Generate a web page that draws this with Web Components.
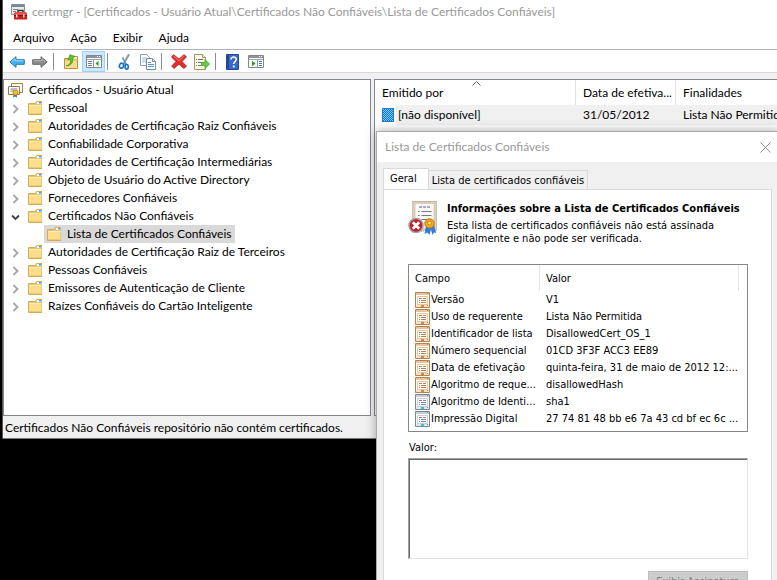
<!DOCTYPE html>
<html lang="pt-BR">
<head>
<meta charset="utf-8">
<title>certmgr</title>
<style>
  html, body { height: 100%; }
  body {
    margin: 0;
    background: #000;
    color: #000;
    overflow: hidden;
    --ui: 12px/18px Lato, "Open Sans", sans-serif;
    --dlg: 11px/13px "DejaVu Sans Condensed", "DejaVu Sans", sans-serif;
    --edge: #828790;
    --face: #f0f0f0;
    font: var(--ui);
  }
</style>
</head>
<body>
<cert-desktop></cert-desktop>

<script>
const folder = `<path d="M.5 2.500h7l1-2h5.500v13H.5z" fill="#e9c66d" stroke="#d3ae58"/><path d="M9 1h4.500v2H9z" fill="#fff"/><path d="M11 1h2.500v1.500H11z" fill="#3c9df0"/><path d="M1 4h12.500v9H1z" fill="#fbdd8b"/><path d="M1 4h12.500v1H1z" fill="#ffedb5"/><path d="M1 12h12.500v1H1z" fill="#efc96f"/>`;
const field = (a, b, c) => `<path d="M.5.5h14v15H.5z" fill="#fff" stroke="${a}"/><path d="M1 1h13v2H1z" fill="${b}"/><path d="M12 1h1v1h-1z" fill="${a}"/><path d="M2.500 4.500h10v8h-10z" fill="#fff" stroke="${b}"/><path d="M4 6h3v1H4zM8 6h3v1H8zM4 8h1v1H4zM6 8h5v1H6zM4 10h1v1H4zM6 10h5v1H6z" fill="${a}"/><path d="M1 13h13v2H1z" fill="${b}" opacity=".5"/><path d="M6 13h3v2H6z" fill="${c}"/><path d="M12 13h1v1h-1z" fill="${a}"/>`;
const paneWindow = `<path d="M.5.5h15v12H.5z" fill="#fff" stroke="#7f8790"/><path d="M1 1h14v2H1z" fill="#8b949d"/><path d="M11 1h1v1h-1zM13 1h1v1h-1z" fill="#fff"/><path d="M1 4.500h14" stroke="#a0a6ad"/>`;

const ICONS = {
  app: [16, 16, `<path d="M.5.5h13v10H.5z" fill="#e9ecef" stroke="#8a8f94"/><path d="M1 1h12v2H1z" fill="#7d858d"/><path d="M2 5h5v1H2zM2 7h3v1H2z" fill="#7b8894"/><path d="M7 8.500V6.500h5v2" fill="none" stroke="#333" stroke-width="1.500"/><path d="M3 9h13v6.500H3z" fill="#c2211d"/><path d="M4 8h11l1 3H3z" fill="#e55348"/><path d="M3 11.500h13" stroke="#7d0f0e"/><path d="M5 10.500h1.500v3H5zM12 10.500h1.500v3H12z" fill="#e7e1dc"/>`],
  back: [16, 12, `<path d="M.8 6 7 .7v3h8.300v4.600H7v3z" fill="#45b1ee" stroke="#2377b7"/><path d="M2.500 5.700 6 2.700v2h8.300" fill="none" stroke="#a2ddfa"/>`],
  forward: [16, 12, `<path d="M15.200 6 9 .7v3H.7v4.600H9v3z" fill="#8c8c8c" stroke="#666"/><path d="M1.700 4.700H10v-2l3.500 3" fill="none" stroke="#b7b7b7"/>`],
  up: [14, 15, `<path d="M.5 4.500h6l1-2h6v12H.5z" fill="#edc96f" stroke="#b8923d"/><path d="M9 3h4v1.500H9z" fill="#fff"/><path d="M1 7h12v7H1z" fill="#f8dc91"/><path d="M2 11.500c3 .3 5-2.500 4.500-6.500L4 6 6 .7l5 1.800L8.800 4C9.500 8.500 6.500 12.500 2 11.500z" fill="#5cc52d" stroke="#36921c" stroke-width=".7"/>`],
  paneLeft: [16, 13, paneWindow + `<path d="M2 6h4v1H2zM2 8h4v1H2zM2 10h4v1H2z" fill="#6e7e8d"/><path d="M7.500 5v7.500" stroke="#8b949d"/><path d="M12.500 5.700v5.600L9.500 8.500z" fill="#1fa31b"/>`],
  paneRight: [16, 13, paneWindow + `<path d="M9.500 5v7.500" stroke="#8b949d"/><path d="M11 6h3v1h-3zM11 8h3v1h-3zM11 10h3v1h-3z" fill="#4879b5"/><path d="M4 5.700v5.600l3.500-2.800z" fill="#1fa31b"/>`],
  cut: [14, 16, `<path d="M11 0 5.500 10M4.500 3.500 8.500 11" stroke="#9eb4c6" stroke-width="2.200"/><path d="M11.300.5 6 10M5 4l3 6.500" stroke="#5f7d95" stroke-width=".7"/><ellipse cx="3.500" cy="11.700" rx="2" ry="2.500" fill="none" stroke="#1673c8" stroke-width="1.700" transform="rotate(25 3.500 11.700)"/><ellipse cx="8.700" cy="12.800" rx="1.600" ry="2.300" fill="none" stroke="#1673c8" stroke-width="1.700"/>`],
  copy: [16, 16, `<path d="M.5.5h6l3 3v8h-9z" fill="#fff" stroke="#8b9cad"/><path d="M2 4h5M2 6h5M2 8h5" stroke="#9fb9d3"/><path d="M6.500 4.500h6l3 3v8h-9z" fill="#fff" stroke="#768ba0"/><path d="M12.500 4.500v3h3" fill="#dbe5ee" stroke="#768ba0"/><path d="M8 8.500h3M8 10.500h6M8 12.500h6" stroke="#5d92c4"/>`],
  del: [16, 15, `<path d="M2.500.7 8 5l5-4.300 2.500 2L11 7.500l4.500 4.700-2.700 2.300L8 10l-5 4.500L.7 12 5 7.500.5 3z" fill="#e3302b" stroke="#b31713" stroke-width=".8"/><path d="m2.500 2 5.500 4.500L13 2" fill="none" stroke="#f58578"/>`],
  exportList: [16, 16, `<path d="M.5.5h8l3 3v12H.5z" fill="#fffbe2" stroke="#a2966b"/><path d="M8.500.5v3h3" fill="#f0e3af" stroke="#a2966b"/><path d="M2 5h1v1H2zM2 8h1v1H2zM2 11h1v1H2zM4 5h5v1H4zM4 8h4v1H4zM4 11h3v1H4z" fill="#65707c"/><path d="M7.500 8.500H11v-3L15.500 10 11 14.500v-3H7.500z" fill="#68ce43" stroke="#3d9e23" stroke-width=".8"/>`],
  help: [13, 16, `<path d="M.5.5h12v15H.5z" fill="#3767c8" stroke="#254a98"/><path d="M1 1h2v14H1z" fill="#21489b"/><path d="M5 5.500C5 2 10.500 2.200 10.300 5.400 10.200 7.500 7.800 7.600 7.700 10" fill="none" stroke="#fff" stroke-width="1.600"/><path d="M6.800 11.500h1.900v1.900H6.800z" fill="#fff"/>`],
  root: [16, 16, `<path d="M3.500 1.500h11v9h-11z" fill="#fffdf4" stroke="#a5854e"/><path d="M.5 4.500h11v8H.5z" fill="#fffef8" stroke="#98783f"/><path d="M2.500 7h7M2.500 9h4" stroke="#6b88bd"/><path d="m6 11-1 4.500 2-1 2 1-.5-4.500z" fill="#246bd4"/><circle cx="7.500" cy="10.500" r="2.600" fill="#f6bd27" stroke="#b77d0d" stroke-width=".8"/>`],
  folder: [14, 14, folder],
  right: [7, 10, `<path d="m1.500 1 4 4-4 4" fill="none" stroke="#a6a6a6" stroke-width="1.800"/>`],
  down: [9, 7, `<path d="m1 1.500 3.500 3.500L8 1.500" fill="none" stroke="#404040" stroke-width="1.800"/>`],
  sort: [9, 5, `<path d="m.5 4.500 4-4 4 4" fill="none" stroke="#6b6b6b"/>`],
  close: [11, 11, `<path d="m.5.5 10 10M10.500.5l-10 10" stroke="#8d8d8d"/>`],
  ctl: [12, 14, `<defs><pattern id="p" width="2" height="2" patternUnits="userSpaceOnUse"><path d="M0 0h2v2H0z" fill="#0078d7"/><path d="M0 0h1v1H0zM1 1h1v1H1z" fill="#8cc5f0"/></pattern></defs><path d="M0 0h12v14H0z" fill="url(#p)"/><path d="M.5.5h11v13H.5z" fill="none" stroke="#1b7fd0"/>`],
  fieldOld: [15, 16, field("#b5814d", "#e8c39b", "#c98b4c")],
  fieldNew: [15, 16, field("#7d8791", "#c6cdd4", "#2cc4f2")],
  badge: [30, 35, `<path d="M6 1.500h21v27H6z" fill="#faf9f3" stroke="#d9cfb9" stroke-width="3"/><path d="M4.500.5h24v29.500h-24z" fill="none" stroke="#a99e88" stroke-dasharray="1 1"/><path d="M11 6h12" stroke="#8593c4" stroke-width="1.500" stroke-dasharray="3 1"/><path d="M10 10.500h1.500M13.500 10.500h10M10 14.500h1.500M13.500 14.500h10M13.500 18.500h9" stroke="#707a94"/><path d="m18 25-1.500 8 3-1.500 2 2.500 1.500-6 1.500 6 1.500-2.500 2 .5-2-8z" fill="#2f7be6"/><circle cx="21.500" cy="22.500" r="4.700" fill="#f0ad1c" stroke="#b57309"/><circle cx="21.500" cy="22" r="2" fill="#ffd75f" stroke="#bd7b0c" stroke-width=".8"/><circle cx="8" cy="24.500" r="7" fill="#c41c28" stroke="#a3a3a8" stroke-width="1.600"/><path d="m4.800 21.300 6.400 6.400M11.200 21.300l-6.400 6.400" stroke="#fff" stroke-width="2.800"/>`]
};

const define = (name, html, setup) => customElements.define(name, class extends HTMLElement {
  constructor() {
    super();
    const t = document.createElement("template");
    t.innerHTML = `<style>*{box-sizing:border-box}</style>` + html;
    this.attachShadow({ mode: "open" }).append(t.content.cloneNode(true));
  }
  connectedCallback() { if (setup && !this.ready) { this.ready = true; setup(this, this.shadowRoot); } }
});

define("ui-icon", `<style>:host{display:inline-flex;flex:none}svg{display:block}</style>`, (el, root) => {
  const [w, h, body] = ICONS[el.getAttribute("name")];
  const t = document.createElement("template");
  t.innerHTML = `<svg width="${w}" height="${h}" viewBox="0 0 ${w} ${h}" aria-hidden="true">${body}</svg>`;
  root.append(t.content);
});

define("title-bar", `<style>
  :host{display:flex;align-items:center;gap:5px;height:25px;padding:0 8px 2px;color:#999;background:#fff}
  span{white-space:nowrap}</style>
  <ui-icon name="app"></ui-icon><span><slot></slot></span>`);

define("menu-item", `<style>
  :host{display:block}
  button{font:inherit;color:inherit;border:0;background:none;padding:2px 8px 0;height:24px}</style>
  <button type="button"><slot></slot></button>`);

define("menu-bar", `<style>
  :host{display:flex;height:25px;padding-left:2px;background:#fff;border-bottom:1px solid #b0b0bb}</style>
  <slot></slot>`);

define("tool-button", `<style>
  :host{display:block}
  button{display:grid;place-items:center;width:23px;height:21px;padding:0;border:1px solid transparent;background:none}
  :host([active]) button{background:#cce8ff;border-color:#99d1ff}</style>
  <button type="button"></button>`, (el, root) => {
  const button = root.querySelector("button");
  button.setAttribute("aria-label", el.getAttribute("label"));
  button.innerHTML = `<ui-icon name="${el.getAttribute("icon")}"></ui-icon>`;
});

define("tool-separator", `<style>:host{display:block;width:8px;height:17px;padding-left:2px}i{display:block;width:1px;height:100%;background:#8c8c8c}</style><i></i>`);

define("tool-bar", `<style>
  :host{display:flex;align-items:center;height:23px;padding:1px 0 0 2px;background:#fff;border-bottom:1px solid #d8d8d8}</style>
  <slot></slot>`);

define("tree-item", `<style>
  :host{display:block}
  .row{display:flex;align-items:center;height:18px}
  .toggle{display:grid;place-items:center;width:21px;height:18px;padding:2px 0 0 2px;border:0;background:none;flex:none}
  .label{display:flex;align-items:center;gap:6px;height:18px;padding:0 3px;white-space:nowrap}
  :host([level="0"]) .label{padding-left:4px;gap:5px}
  :host([level="2"]) .row{padding-left:19px}
  :host([selected]) .label{background:#d9d9d9}
  .icon{display:flex}
  .blank{width:21px}</style>
  <div class="row"><button class="toggle" type="button"></button><span class="label"><span class="icon"></span><slot></slot></span></div>`, (el, root) => {
  const state = el.getAttribute("state");
  const toggle = root.querySelector(".toggle");
  el.setAttribute("role", "treeitem");
  if (state) {
    toggle.innerHTML = `<ui-icon name="${state === "open" ? "down" : "right"}"></ui-icon>`;
    toggle.setAttribute("aria-label", state === "open" ? "Recolher" : "Expandir");
    el.setAttribute("aria-expanded", state === "open");
  } else if (el.getAttribute("level") === "0") toggle.remove();
  else toggle.replaceWith(Object.assign(document.createElement("span"), { className: "blank" }));
  root.querySelector(".icon").innerHTML = `<ui-icon name="${el.getAttribute("icon") || "folder"}"></ui-icon>`;
});

define("tree-view", `<style>
  :host{display:block;background:#fff;border:1px solid var(--edge);padding-top:1px;overflow:hidden}</style>
  <div role="tree" aria-label="Certificados"><slot></slot></div>`);

define("cert-list", `<style>
  :host{display:block;background:#fff;border:1px solid var(--edge);border-right:0;overflow:hidden}
  table{border-collapse:separate;border-spacing:0;table-layout:fixed;width:100%}
  col.a{width:201px}col.b{width:100px}
  th,td{font-weight:400;text-align:left;padding:0 0 0 7px;white-space:nowrap}
  th{height:25px;border-right:1px solid #e2e2e2;padding-top:1px}
  th:last-child{border:0}
  td{height:20px;background:var(--face)}
  td:first-child{background:linear-gradient(90deg,#fff 21px,var(--face) 21px)}
  .name{display:flex;align-items:center;gap:4px}
  .head{position:relative}
  .head ui-icon{position:absolute;left:90px;top:-3px}</style>
  <table><colgroup><col class="a"><col class="b"><col></colgroup>
  <thead><tr><th><div class="head">Emitido por<ui-icon name="sort"></ui-icon></div></th><th>Data de efetiva...</th><th>Finalidades</th></tr></thead>
  <tbody><tr><td><div class="name"><ui-icon name="ctl"></ui-icon>[não disponível]</div></td><td>31/05/2012</td><td>Lista Não Permitida</td></tr></tbody></table>`);

define("status-bar", `<style>
  :host{display:flex;align-items:center;height:23px;padding:2px 0 0 2px;background:var(--face);white-space:nowrap;border-bottom:1px solid #777}</style>
  <slot></slot>`);

define("console-window", `<style>
  :host{display:flex;flex-direction:column;background:var(--face);margin-left:3px;box-shadow:-1px 0 #555}
  .panes{display:grid;grid-template-columns:368px 1fr;gap:3px;padding-top:6px;height:343px}
  .panes>*{min-width:0}</style>
  <title-bar>certmgr - [Certificados - Usuário Atual\\Certificados Não Confiáveis\\Lista de Certificados Confiáveis]</title-bar>
  <menu-bar><menu-item>Arquivo</menu-item><menu-item>Ação</menu-item><menu-item>Exibir</menu-item><menu-item>Ajuda</menu-item></menu-bar>
  <tool-bar>
    <tool-button icon="back" label="Voltar"></tool-button><tool-button icon="forward" label="Avançar"></tool-button><tool-separator></tool-separator>
    <tool-button icon="up" label="Subir um nível"></tool-button><tool-button icon="paneLeft" label="Mostrar árvore" active></tool-button><tool-separator></tool-separator>
    <tool-button icon="cut" label="Recortar"></tool-button><tool-button icon="copy" label="Copiar"></tool-button><tool-separator></tool-separator>
    <tool-button icon="del" label="Excluir"></tool-button><tool-button icon="exportList" label="Exportar lista"></tool-button><tool-separator></tool-separator>
    <tool-button icon="help" label="Ajuda"></tool-button><tool-button icon="paneRight" label="Mostrar painel"></tool-button>
  </tool-bar>
  <div class="panes">
    <tree-view>
      <tree-item level="0" icon="root">Certificados - Usuário Atual</tree-item>
      <tree-item state="closed">Pessoal</tree-item>
      <tree-item state="closed">Autoridades de Certificação Raiz Confiáveis</tree-item>
      <tree-item state="closed">Confiabilidade Corporativa</tree-item>
      <tree-item state="closed">Autoridades de Certificação Intermediárias</tree-item>
      <tree-item state="closed">Objeto de Usuário do Active Directory</tree-item>
      <tree-item state="closed">Fornecedores Confiáveis</tree-item>
      <tree-item state="open">Certificados Não Confiáveis</tree-item>
      <tree-item level="2" selected>Lista de Certificados Confiáveis</tree-item>
      <tree-item state="closed">Autoridades de Certificação Raiz de Terceiros</tree-item>
      <tree-item state="closed">Pessoas Confiáveis</tree-item>
      <tree-item state="closed">Emissores de Autenticação de Cliente</tree-item>
      <tree-item state="closed">Raízes Confiáveis do Cartão Inteligente</tree-item>
    </tree-view>
    <cert-list></cert-list>
  </div>
  <status-bar>Certificados Não Confiáveis repositório não contém certificados.</status-bar>`);

define("tab-button", `<style>
  :host{display:block}
  button{font:inherit;color:inherit;white-space:nowrap;height:19px;padding:0 3px;border:1px solid #d9d9d9;border-bottom:0;background:var(--face)}
  :host([active]){margin-bottom:-1px}
  :host([active]) button{height:22px;padding:0 11px 2px 6px;background:#fff}
  :host(:not([active])) button{border-left:0}</style>
  <button type="button" role="tab"><slot></slot></button>`);

define("field-table", `<style>
  :host{display:block;border:1px solid var(--edge);padding-bottom:4px;background:#fff}
  table{border-collapse:separate;border-spacing:0;table-layout:fixed;width:100%}
  col.a{width:131px}col.c{width:8px}
  th{font-weight:400;text-align:left;height:26px;padding:0 0 0 6px;background:linear-gradient(#e5e5e5,#e5e5e5) right/1px 100% no-repeat}
  td{height:17px;padding:0 6px;white-space:nowrap}
  td:nth-child(3){padding:0}
  .name{display:flex;align-items:center;gap:1px;height:17px}</style>
  <table><colgroup><col class="a"><col><col class="c"></colgroup>
  <thead><tr><th>Campo</th><th>Valor</th><td></td></tr></thead><tbody></tbody></table>`, (el, root) => {
  root.querySelector("tbody").innerHTML = [
    ["Versão", "V1"], ["Uso de requerente", "Lista Não Permitida"], ["Identificador de lista", "DisallowedCert_OS_1"],
    ["Número sequencial", "01CD 3F3F ACC3 EE89"], ["Data de efetivação", "quinta-feira, 31 de maio de 2012 12:..."],
    ["Algoritmo de reque...", "disallowedHash"], ["Algoritmo de Identi...", "sha1"], ["Impressão Digital", "27 74 81 48 bb e6 7a 43 cd bf ec 6c ..."]
  ].map(([k, v], i) => `<tr><td><div class="name"><ui-icon name="${i < 6 ? "fieldOld" : "fieldNew"}"></ui-icon>${k}</div></td><td>${v}</td><td></td></tr>`).join("");
});

define("trust-dialog", `<style>
  :host{display:flex;flex-direction:column;background:var(--face);border:1px solid #aaa;box-shadow:0 0 10px rgba(0,0,0,.35);font:var(--dlg)}
  header{display:flex;align-items:center;justify-content:space-between;height:30px;padding:0 9px 0 8px;background:#fff;color:#999;font:var(--ui)}
  header button{border:0;padding:0;background:none;display:flex}
  .body{padding:7px 8px 0 6px;flex:1;display:flex;flex-direction:column}
  nav{display:flex;align-items:flex-end;height:20px}
  .page{flex:1;background:#fff;border:1px solid #d9d9d9;padding:11px 23px 0 24px;display:flex;flex-direction:column}
  .intro{display:flex;gap:9px;height:63px}
  h1{font:inherit;font-weight:700;margin:1px 0 4px;white-space:nowrap}
  p{margin:0}
  label{display:block;margin:9px 1px 4px}
  textarea{display:block;width:100%;height:101px;margin:0;resize:none;border:1px solid;border-color:#a0a0a0 #e3e3e3 #e3e3e3 #a0a0a0;box-shadow:inset 1px 1px #696969;background:#fff;font:inherit;outline:0}
  .act{align-self:flex-end;margin-top:12px;width:100px;height:21px;flex:none;border:1px solid #bfbfbf;background:#ccc;color:#838383;font:inherit;padding:0;white-space:nowrap}</style>
  <header><span>Lista de Certificados Confiáveis</span><button type="button" aria-label="Fechar"><ui-icon name="close"></ui-icon></button></header>
  <div class="body">
    <nav role="tablist"><tab-button active>Geral</tab-button><tab-button>Lista de certificados confiáveis</tab-button></nav>
    <section class="page">
      <div class="intro"><ui-icon name="badge"></ui-icon><div><h1>Informações sobre a Lista de Certificados Confiáveis</h1><p>Esta lista de certificados confiáveis não está assinada<br>digitalmente e não pode ser verificada.</p></div></div>
      <field-table></field-table>
      <label for="v">Valor:</label>
      <textarea id="v" readonly></textarea>
      <button class="act" type="button" disabled>Exibir Assinatura</button>
    </section>
  </div>`);

define("cert-desktop", `<style>
  :host{display:block;position:relative;height:100%;overflow:hidden}
  trust-dialog{position:absolute;left:376px;right:-4px;top:131px;min-height:480px}</style>
  <console-window></console-window>
  <trust-dialog></trust-dialog>`);
</script>
</body>
</html>
